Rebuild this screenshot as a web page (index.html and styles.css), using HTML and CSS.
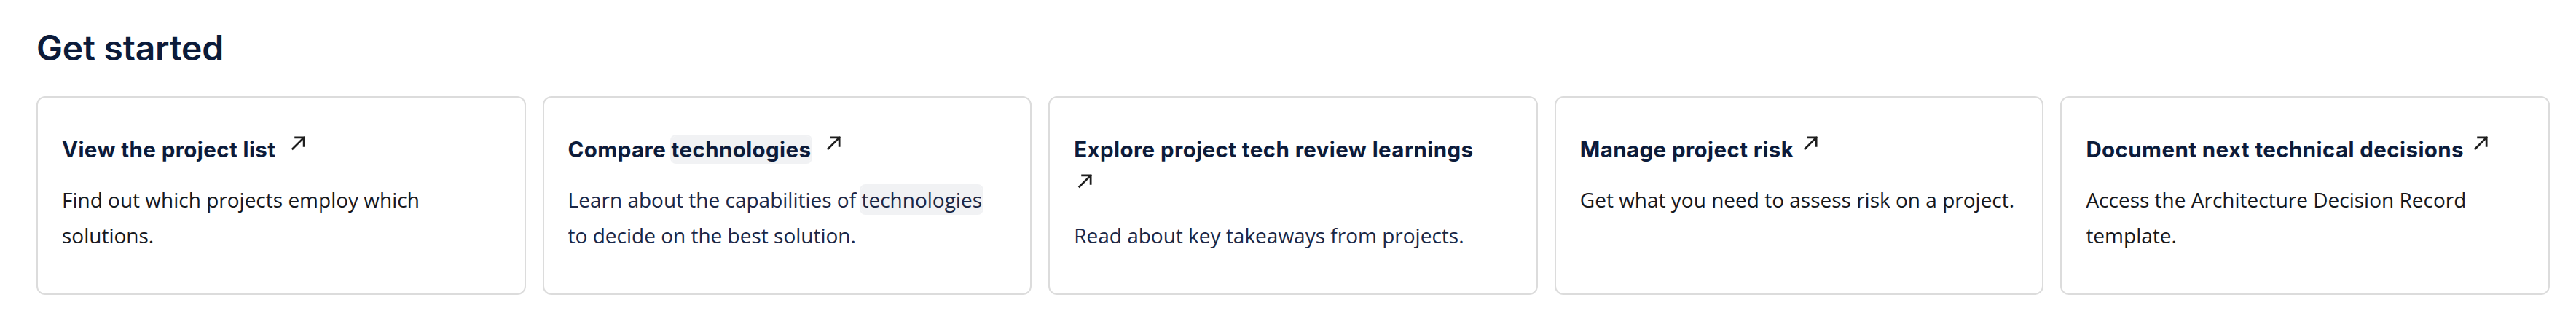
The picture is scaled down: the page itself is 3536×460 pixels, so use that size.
FILE: index.html
```html
<!DOCTYPE html>
<html lang="en">
<head>
<meta charset="utf-8">
<title>Get started</title>
<link rel="stylesheet" href="styles.css">
</head>
<body>
<section class="get-started">
  <h2 class="section-title">Get started</h2>
  <div class="card-grid">
    <a class="card" href="#">
      <h3 class="card-title">View the project list <svg class="ext-icon" viewBox="0 0 20 20" aria-hidden="true"><path d="M2.5 17.5 L16.5 3.5 M6 3.5 H16.5 V14"/></svg></h3>
      <p class="card-text">Find out which projects employ which solutions.</p>
    </a>
    <a class="card" href="#">
      <h3 class="card-title">Compare <span class="term">technologies</span> <svg class="ext-icon" viewBox="0 0 20 20" aria-hidden="true"><path d="M2.5 17.5 L16.5 3.5 M6 3.5 H16.5 V14"/></svg></h3>
      <p class="card-text card-text--navy">Learn about the capabilities of <span class="term">technologies</span> to decide on the best solution.</p>
    </a>
    <a class="card" href="#">
      <h3 class="card-title card-title--wrap">Explore project tech review learnings <svg class="ext-icon" viewBox="0 0 20 20" aria-hidden="true"><path d="M2.5 17.5 L16.5 3.5 M6 3.5 H16.5 V14"/></svg></h3>
      <p class="card-text card-text--navy">Read about key takeaways from projects.</p>
    </a>
    <a class="card" href="#">
      <h3 class="card-title">Manage project risk<svg class="ext-icon" viewBox="0 0 20 20" aria-hidden="true"><path d="M2.5 17.5 L16.5 3.5 M6 3.5 H16.5 V14"/></svg></h3>
      <p class="card-text">Get what you need to assess risk on a project.</p>
    </a>
    <a class="card" href="#">
      <h3 class="card-title">Document next technical decisions<svg class="ext-icon" viewBox="0 0 20 20" aria-hidden="true"><path d="M2.5 17.5 L16.5 3.5 M6 3.5 H16.5 V14"/></svg></h3>
      <p class="card-text">Access the Architecture Decision Record template.</p>
    </a>
  </div>
</section>
</body>
</html>
```

FILE: styles.css
```css
html, body {
  margin: 0;
  padding: 0;
  background: #ffffff;
}

.get-started {
  padding: 37px 36px 0 50px;
}

.section-title {
  margin: 0 0 37px 0;
  font-family: Inter, "Noto Sans", sans-serif;
  font-weight: 600;
  font-size: 48px;
  line-height: 57.6px;
  color: #0c1b3a;
  letter-spacing: -0.2px;
}

.card-grid {
  display: grid;
  grid-template-columns: repeat(5, 1fr);
  gap: 23px;
}

.card {
  box-sizing: border-box;
  min-height: 273px;
  padding: 51px 35px 24px 33px;
  border: 2px solid #dcdcdc;
  border-radius: 12px;
  background: #ffffff;
  text-decoration: none;
  display: block;
}

.card-title {
  margin: 0;
  font-family: Inter, "Noto Sans", sans-serif;
  font-weight: 700;
  font-size: 29.5px;
  line-height: 40px;
  letter-spacing: 0.4px;
  color: #0c1b3a;
}

.ext-icon {
  width: 22px;
  height: 22px;
  margin-left: 13px;
  vertical-align: 9px;
  fill: none;
  stroke: #1e1e1e;
  stroke-width: 2.5;
  stroke-linecap: square;
}

.card-title--wrap .ext-icon {
  display: block;
  margin: 12px 0 40px 5px;
}

.card-text {
  margin: 25px 0 0 0;
  font-family: "Open Sans", "Noto Sans", sans-serif;
  font-weight: 400;
  font-size: 28px;
  line-height: 49px;
  color: #16181d;
}

.card-title--wrap + .card-text {
  margin-top: 0;
}

.card-text--navy {
  color: #1a2746;
}

.term {
  background: #f1f2f4;
  border-radius: 6px;
  box-shadow: 0 0 0 2px #f1f2f4;
}
```
